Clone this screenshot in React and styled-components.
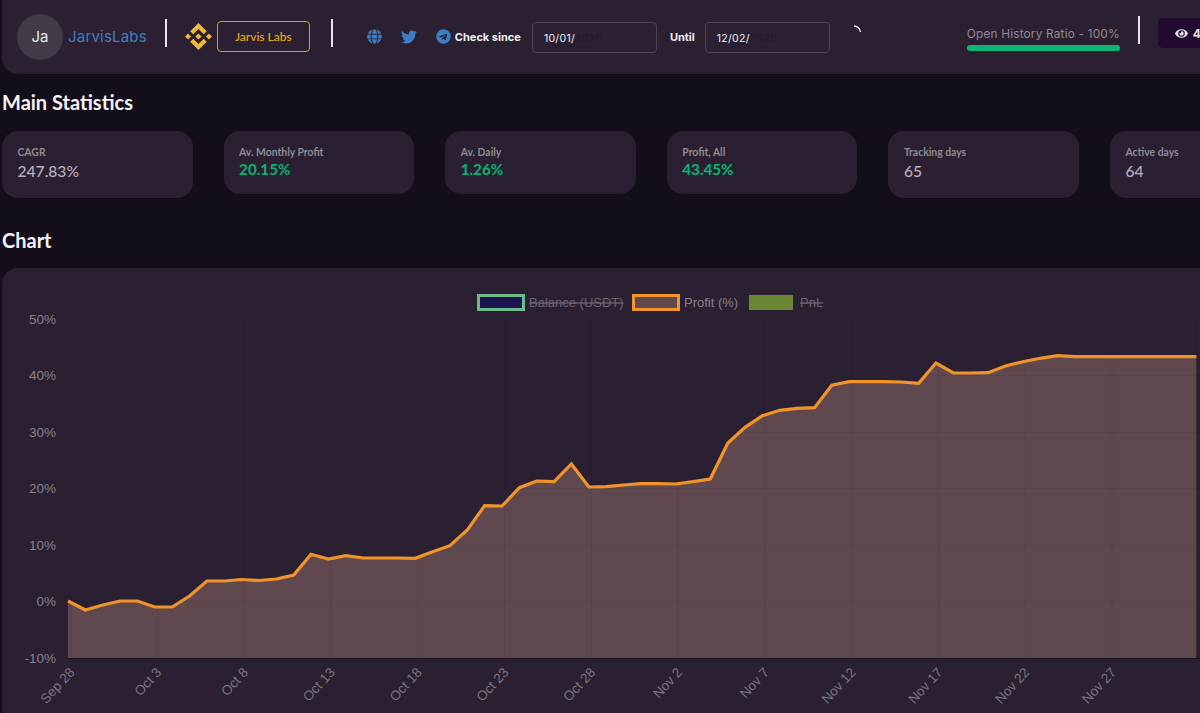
import styled, { createGlobalStyle } from 'styled-components';
import { FaGlobe, FaTwitter, FaTelegram, FaEye } from 'react-icons/fa';
import { SiBinance } from 'react-icons/si';

const GlobalStyle = createGlobalStyle`
  html, body {
    margin: 0;
    height: 713px;
    overflow: hidden;
    background: #130e19;
  }
  #root {
    width: 1200px;
    height: 713px;
    overflow: hidden;
  }
`;

const Page = styled.div`
  width: 1198px;
  padding-left: 2px;
  font-family: Inter, sans-serif;
`;

const Header = styled.header`
  display: flex;
  align-items: center;
  width: 1240px;
  height: 74px;
  padding: 0 0 1px 15px;
  box-sizing: border-box;
  background: #2a2031;
  border-radius: 0 0 0 16px;
`;

const Avatar = styled.div`
  display: flex;
  align-items: center;
  justify-content: center;
  flex-shrink: 0;
  width: 46px;
  height: 46px;
  border-radius: 50%;
  background: #413a47;
  color: #e8e6ea;
  font-size: 15px;
`;

const UserName = styled.span`
  margin-left: 5px;
  color: #3f7dc0;
  font-size: 15px;
  letter-spacing: 0.2px;
`;

const Divider = styled.span`
  flex-shrink: 0;
  width: 2px;
  height: 28px;
  margin: ${p => p.$margin};
  background: #e6e4e8;
`;

const BrokerButton = styled.div`
  display: flex;
  align-items: center;
  justify-content: center;
  flex-shrink: 0;
  width: 93px;
  height: 31px;
  margin-left: 5px;
  box-sizing: border-box;
  border: 1px solid #e0a112;
  border-radius: 4px;
  color: #eca915;
  font-family: Lato, sans-serif;
  font-size: 12px;
  font-weight: 500;
`;

const Socials = styled.div`
  display: flex;
  align-items: center;
  gap: 19px;
  color: #3b7ec4;
  font-size: 15px;
`;

const FieldLabel = styled.span`
  flex-shrink: 0;
  margin: ${p => p.$margin};
  color: #f2f0f4;
  font-size: 11px;
  font-weight: 700;
`;

const DateBox = styled.div`
  flex-shrink: 0;
  width: 125px;
  height: 31px;
  margin-top: 1px;
  padding: 3px 0 0 11px;
  box-sizing: border-box;
  display: flex;
  align-items: center;
  border: 1px solid #4a4450;
  border-radius: 4px;
  color: #f2f0f4;
  font-size: 10.5px;
  letter-spacing: 0.3px;
`;

const DateHint = styled.span`
  color: #211a27;
`;

const Spinner = styled.svg`
  flex-shrink: 0;
  align-self: flex-start;
  margin: 25px 0 0 23px;
`;

const Ratio = styled.div`
  flex-shrink: 0;
  width: 153px;
  margin-left: 105px;
`;

const RatioLabel = styled.div`
  margin-top: 3px;
  color: #8f8a94;
  font-size: 11.8px;
  letter-spacing: 0.2px;
  line-height: 16px;
  white-space: nowrap;
`;

const RatioBar = styled.div`
  height: 6px;
  margin-top: 3px;
  border-radius: 3px;
  background: #0bb574;
`;

const ViewsPill = styled.div`
  display: flex;
  align-items: center;
  gap: 5px;
  flex-shrink: 0;
  width: 80px;
  height: 30px;
  margin-top: -7px;
  padding-left: 17px;
  box-sizing: border-box;
  border-radius: 5px;
  background: #22092f;
  color: #e6e4e8;
  font-size: 12px;
  font-weight: 700;
`;

const SectionTitle = styled.h2`
  margin: ${p => p.$margin};
  color: #f5f3f7;
  font-family: Lato, sans-serif;
  font-size: 20px;
  font-weight: 700;
  line-height: 24px;
`;

const StatRow = styled.div`
  display: flex;
  align-items: flex-start;
  gap: 31px;
  width: 1340px;
`;

const StatCard = styled.div`
  flex-shrink: 0;
  width: 190.6px;
  padding: 15px 15.5px 13px;
  box-sizing: border-box;
  background: #2a2031;
  border-radius: 16px;
`;

const StatLabel = styled.div`
  color: #8f8a94;
  font-family: Lato, sans-serif;
  font-size: 10.4px;
  font-weight: 700;
  line-height: 13px;
`;

const StatValue = styled.div`
  margin: ${p => (p.$positive ? '-1px 0 1px' : '-1px 0 0')};
  color: ${p => (p.$positive ? '#0bb574' : '#b9b0bf')};
  font-family: Lato, sans-serif;
  font-size: ${p => (p.$positive ? 15.2 : 15.6)}px;
  font-weight: ${p => (p.$positive ? 700 : 500)};
  line-height: ${p => (p.$positive ? 22 : 27)}px;
`;

const ChartCard = styled.section`
  width: 1198px;
  height: 445px;
  background: #2a2031;
  border-radius: 16px 0 0 0;
`;

const ChartSvg = styled.svg`
  display: block;
  font-family: 'Liberation Sans', sans-serif;
`;

const stats = [
  { label: 'CAGR', value: '247.83%' },
  { label: 'Av. Monthly Profit', value: '20.15%', positive: true },
  { label: 'Av. Daily', value: '1.26%', positive: true },
  { label: 'Profit, All', value: '43.45%', positive: true },
  { label: 'Tracking days', value: '65' },
  { label: 'Active days', value: '64' },
];

// traced y values for the profit line, one per day
const profitY = [
  601, 610, 605, 601, 601, 607, 607, 596, 581, 581, 579.5, 580.5, 579, 575, 554.3, 559,
  555.7, 558, 558, 558, 558.3, 551.7, 545.7, 530, 505.7, 506, 487.7, 481, 481.7, 464, 487,
  486.7, 485, 483.7, 483.7, 484, 481.7, 479, 443.3, 427.3, 415.7, 410.3, 408.3, 407.7,
  385.3, 381.7, 381.7, 381.7, 382, 383.3, 363, 373, 373, 372.7, 366, 361.7, 358.3, 355.7,
  356.7, 356.7, 356.7, 356.7, 356.7, 356.7, 356.7, 356.7,
];
const startX = 68;
const stepX = 17.36;
const linePoints = profitY.map((y, i) => `${(startX + stepX * i).toFixed(1)},${y}`).join(' ');
const areaPoints = `${startX},658 ${linePoints} ${startX + stepX * 65},658`;

const yTicks = [
  ['50%', 319], ['40%', 375], ['30%', 432], ['20%', 488], ['10%', 545], ['0%', 601], ['-10%', 658],
];
const xTicks = ['Sep 28', 'Oct 3', 'Oct 8', 'Oct 13', 'Oct 18', 'Oct 23', 'Oct 28', 'Nov 2', 'Nov 7', 'Nov 12', 'Nov 17', 'Nov 22', 'Nov 27'];

function ProfitChart() {
  return (
    <ChartSvg width="1198" height="445" viewBox="2 268 1198 445">
      <polygon points={areaPoints} fill="#5f484e" />
      {yTicks.map(([, y]) => (
        <line key={y} x1="70" x2="1200" y1={y + 0.5} y2={y + 0.5} stroke="rgba(0,0,0,0.05)" />
      ))}
      {xTicks.map((_, i) => (
        <line key={i} x1={70.5 + 86.8 * i} x2={70.5 + 86.8 * i} y1="319" y2="658" stroke="rgba(0,0,0,0.07)" />
      ))}
      <line x1="1196" x2="1196" y1="319" y2="658" stroke="rgba(0,0,0,0.1)" />
      <line x1="68" x2="1200" y1="658.5" y2="658.5" stroke="rgba(0,0,0,0.3)" />
      <polyline points={linePoints} fill="none" stroke="#f0932b" strokeWidth="3.2" strokeLinejoin="miter" />
      {yTicks.map(([label, y]) => (
        <text key={label} x="56" y={y + 5} textAnchor="end" fontSize="13.5" fill="#86818b">{label}</text>
      ))}
      {xTicks.map((label, i) => {
        const x = 71 + 86.8 * i;
        return (
          <text key={label} x={x} y="675" textAnchor="end" fontSize="13.5" fill="#7a7580" transform={`rotate(-47 ${x} 669)`}>
            {label}
          </text>
        );
      })}
      <rect x="478.5" y="295.5" width="45" height="14" fill="#1c1650" stroke="#6fb98a" strokeWidth="3" />
      <text x="529" y="307" fontSize="13" fill="#6b6570" textDecoration="line-through">Balance (USDT)</text>
      <rect x="633.5" y="295.5" width="45" height="14" fill="#5f484e" stroke="#f0932b" strokeWidth="3" />
      <text x="684" y="307" fontSize="13" fill="#87828c">Profit (%)</text>
      <rect x="749" y="295" width="44" height="15" fill="#6a8733" />
      <text x="800" y="307" fontSize="13" fill="#6b6570" textDecoration="line-through">PnL</text>
    </ChartSvg>
  );
}

export default function App() {
  return (
    <Page>
      <GlobalStyle />
      <Header>
        <Avatar>Ja</Avatar>
        <UserName>JarvisLabs</UserName>
        <Divider $margin="-7px 18px 0 18px" />
        <SiBinance size={27} color="#f3ba2f" style={{ flexShrink: 0 }} />
        <BrokerButton>Jarvis Labs</BrokerButton>
        <Divider $margin="-7px 34px 0 21px" />
        <Socials>
          <FaGlobe />
          <FaTwitter size={16} />
          <FaTelegram />
        </Socials>
        <FieldLabel $margin="0 11px 0 4px">Check since</FieldLabel>
        <DateBox>10/01/<DateHint>2020</DateHint></DateBox>
        <FieldLabel $margin="0 10px 0 13px">Until</FieldLabel>
        <DateBox>12/02/<DateHint>2020</DateHint></DateBox>
        <Spinner width="9" height="8" viewBox="0 0 9 8">
          <path d="M1 1 A7 7 0 0 1 7.5 7" fill="none" stroke="#f2f0f4" strokeWidth="1.4" />
        </Spinner>
        <Ratio>
          <RatioLabel>Open History Ratio - 100%</RatioLabel>
          <RatioBar />
        </Ratio>
        <Divider $margin="-13px 18px 0 18px" />
        <ViewsPill><FaEye size={13} />4</ViewsPill>
      </Header>
      <SectionTitle $margin="16px 0 17px">Main Statistics</SectionTitle>
      <StatRow>
        {stats.map(s => (
          <StatCard key={s.label}>
            <StatLabel>{s.label}</StatLabel>
            <StatValue $positive={s.positive}>{s.value}</StatValue>
          </StatCard>
        ))}
      </StatRow>
      <SectionTitle $margin="30px 0 16px">Chart</SectionTitle>
      <ChartCard>
        <ProfitChart />
      </ChartCard>
    </Page>
  );
}
